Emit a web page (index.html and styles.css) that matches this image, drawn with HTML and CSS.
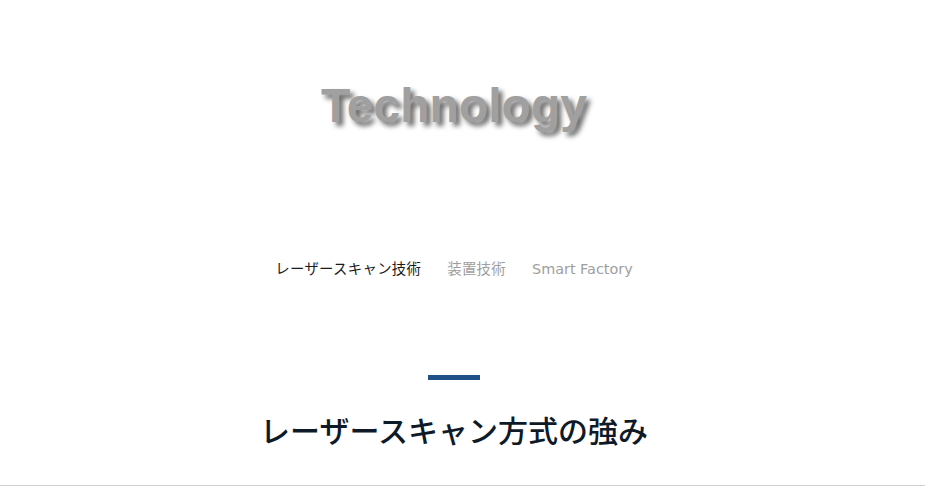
FILE: index.html
```html
<!DOCTYPE html>
<html lang="ja">
<head>
<meta charset="utf-8">
<link rel="stylesheet" href="styles.css">
</head>
<body>
<div class="page">
  <header class="hero">
    <h1 class="hero-title">Technology</h1>
  </header>
  <nav class="tabs">
    <a class="tab tab-active tab-ja">レーザースキャン技術</a>
    <a class="tab tab-ja">装置技術</a>
    <a class="tab">Smart Factory</a>
  </nav>
  <section class="intro">
    <div class="intro-bar"></div>
    <h2 class="intro-title">レーザースキャン方式の強み</h2>
  </section>
</div>
<div class="divider"></div>
</body>
</html>
```
FILE: styles.css
```css
html, body {
  margin: 0;
  padding: 0;
  background: #ffffff;
}
body {
  font-family: "Noto Sans CJK JP", "Noto Sans", sans-serif;
  color: #222222;
}
.page {
  width: 908px;
}
.hero {
  padding-top: 82px;
  display: flex;
  justify-content: center;
}
.hero-title {
  margin: 0;
  font-family: "Liberation Sans", Arial, sans-serif;
  font-weight: 700;
  font-size: 48px;
  line-height: 48px;
  color: #a0a0a0;
  text-shadow: 4px 4px 5px rgba(0, 0, 0, 0.6);
}
.tabs {
  margin-top: 129px;
  display: flex;
  justify-content: center;
  gap: 26px;
  font-family: "DejaVu Sans", "Noto Sans CJK JP", sans-serif;
  font-size: 14.4px;
  line-height: 20px;
}
.tab {
  color: #9e9e9e;
  text-decoration: none;
}
.tab-ja {
  letter-spacing: 0.3px;
}
.tab-active {
  color: #1a1a1a;
}
.intro {
  margin-top: 96px;
  display: flex;
  flex-direction: column;
  align-items: center;
}
.intro-bar {
  width: 52px;
  height: 5px;
  background: #1f5186;
}
.intro-title {
  margin: 29px 0 0;
  font-size: 30px;
  font-weight: 500;
  line-height: 40px;
  color: #0e1a28;
}
.divider {
  position: absolute;
  left: 0;
  right: 0;
  top: 485px;
  height: 1px;
  background: #cfd3d7;
}
```
